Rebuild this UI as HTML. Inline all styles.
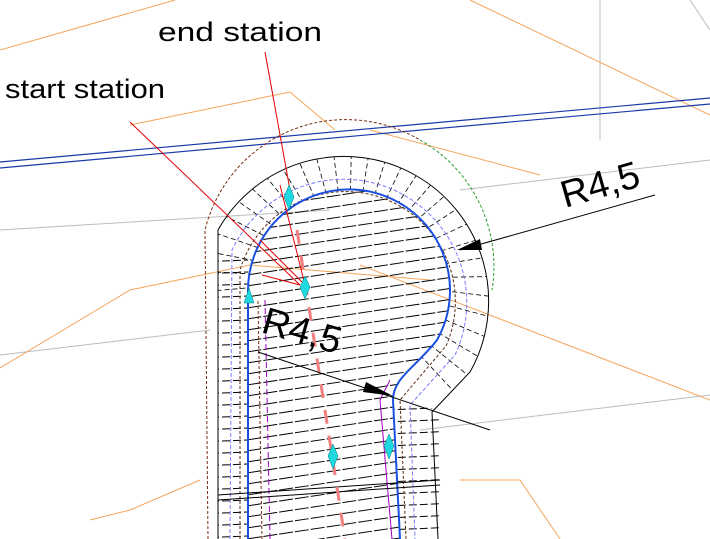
<!DOCTYPE html>
<html><head><style>
html,body{margin:0;padding:0;background:#fff;width:710px;height:539px;overflow:hidden}
svg{display:block}
text{font-family:"Liberation Sans",Arial,sans-serif;fill:#000}
</style></head><body>
<svg width="710" height="539" viewBox="0 0 710 539" xmlns="http://www.w3.org/2000/svg">
<defs>
<clipPath id="inner"><path d="M248,539 L248,290 A101,101 0 1 1 437,340 C415,368 393,378 393,400 L400,539 Z"/></clipPath>
<clipPath id="side"><path d="M218,539 L218,250 L248,250 L248,539 Z M400,539 L393,400 L440,410 L440,539 Z"/></clipPath>
<clipPath id="ring"><path d="M218,539 L218,230 A135,135 0 1 1 470,372 L432,412 L438,539 Z M248,539 L248,290 A101,101 0 1 1 437,340 C415,368 393,378 393,400 L400,539 Z" clip-rule="evenodd"/></clipPath>
</defs>
<g stroke="#bdbdbd" stroke-width="1" fill="none">
<line x1="600" y1="0" x2="600" y2="140"/>
<line x1="0" y1="230" x2="330" y2="210"/>
<line x1="460" y1="190" x2="710" y2="160"/>
<line x1="0" y1="355" x2="210" y2="330"/>
<line x1="420" y1="430" x2="710" y2="395"/>
<line x1="690" y1="0" x2="710" y2="30"/>
</g>
<g stroke="#f5a55a" stroke-width="1" fill="none">
<polyline points="0,50 175,0"/>
<polyline points="470,0 710,115"/>
<polyline points="0,368 130,290 250,265 430,280"/>
<polyline points="130,125 290,92 335,130"/>
<polyline points="370,130 540,175"/>
<polyline points="360,265 710,400"/>
<polyline points="90,520 130,510 200,480"/>
<polyline points="460,480 520,480 560,539"/>
</g>
<g stroke="#1a3aa8" stroke-width="1.2" fill="none">
<line x1="0" y1="162" x2="710" y2="98"/>
<line x1="0" y1="168" x2="710" y2="104"/>
</g>
<g id="hh" stroke="#000" stroke-width="1" stroke-dasharray="14 2">
<g clip-path="url(#inner)">
<g id="h">
<line x1="200" y1="205" x2="480" y2="163"/><line x1="200" y1="216" x2="480" y2="174"/>
<line x1="200" y1="227" x2="480" y2="185"/><line x1="200" y1="238" x2="480" y2="196"/>
<line x1="200" y1="249" x2="480" y2="207"/><line x1="200" y1="260" x2="480" y2="218"/>
<line x1="200" y1="271" x2="480" y2="229"/><line x1="200" y1="282" x2="480" y2="240"/>
<line x1="200" y1="293" x2="480" y2="251"/><line x1="200" y1="304" x2="480" y2="262"/>
<line x1="200" y1="315" x2="480" y2="273"/><line x1="200" y1="326" x2="480" y2="284"/>
<line x1="200" y1="337" x2="480" y2="295"/><line x1="200" y1="348" x2="480" y2="306"/>
<line x1="200" y1="359" x2="480" y2="317"/><line x1="200" y1="370" x2="480" y2="328"/>
<line x1="200" y1="381" x2="480" y2="339"/><line x1="200" y1="392" x2="480" y2="350"/>
<line x1="200" y1="403" x2="480" y2="361"/><line x1="200" y1="414" x2="480" y2="372"/>
<line x1="200" y1="425" x2="480" y2="383"/><line x1="200" y1="436" x2="480" y2="394"/>
<line x1="200" y1="447" x2="480" y2="405"/><line x1="200" y1="458" x2="480" y2="416"/>
<line x1="200" y1="469" x2="480" y2="427"/><line x1="200" y1="480" x2="480" y2="438"/>
<line x1="200" y1="491" x2="480" y2="449"/><line x1="200" y1="502" x2="480" y2="460"/>
<line x1="200" y1="513" x2="480" y2="471"/><line x1="200" y1="524" x2="480" y2="482"/>
<line x1="200" y1="535" x2="480" y2="493"/><line x1="200" y1="546" x2="480" y2="504"/>
<line x1="200" y1="557" x2="480" y2="515"/><line x1="200" y1="568" x2="480" y2="526"/>
<line x1="200" y1="579" x2="480" y2="537"/><line x1="200" y1="590" x2="480" y2="548"/>
</g>
</g>
<g clip-path="url(#side)" stroke-dasharray="8 3">
<line x1="200" y1="262" x2="480" y2="250"/><line x1="200" y1="274" x2="480" y2="262"/>
<line x1="200" y1="286" x2="480" y2="274"/><line x1="200" y1="298" x2="480" y2="286"/>
<line x1="200" y1="310" x2="480" y2="298"/><line x1="200" y1="322" x2="480" y2="310"/>
<line x1="200" y1="334" x2="480" y2="322"/><line x1="200" y1="346" x2="480" y2="334"/>
<line x1="200" y1="358" x2="480" y2="346"/><line x1="200" y1="370" x2="480" y2="358"/>
<line x1="200" y1="382" x2="480" y2="370"/><line x1="200" y1="394" x2="480" y2="382"/>
<line x1="200" y1="406" x2="480" y2="394"/><line x1="200" y1="418" x2="480" y2="406"/>
<line x1="200" y1="430" x2="480" y2="418"/><line x1="200" y1="442" x2="480" y2="430"/>
<line x1="200" y1="454" x2="480" y2="442"/><line x1="200" y1="466" x2="480" y2="454"/>
<line x1="200" y1="478" x2="480" y2="466"/><line x1="200" y1="490" x2="480" y2="478"/>
<line x1="200" y1="502" x2="480" y2="490"/><line x1="200" y1="514" x2="480" y2="502"/>
<line x1="200" y1="526" x2="480" y2="514"/><line x1="200" y1="538" x2="480" y2="526"/>
</g>
</g>
<g clip-path="url(#ring)" stroke="#000" stroke-width="0.8" stroke-dasharray="5 3">
<g transform="translate(349,279)">
<line x1="0" y1="0" x2="200" y2="0" transform="rotate(175)"/><line x1="0" y1="0" x2="200" y2="0" transform="rotate(183)"/>
<line x1="0" y1="0" x2="200" y2="0" transform="rotate(191)"/><line x1="0" y1="0" x2="200" y2="0" transform="rotate(199)"/>
<line x1="0" y1="0" x2="200" y2="0" transform="rotate(207)"/><line x1="0" y1="0" x2="200" y2="0" transform="rotate(215)"/>
<line x1="0" y1="0" x2="200" y2="0" transform="rotate(223)"/><line x1="0" y1="0" x2="200" y2="0" transform="rotate(231)"/>
<line x1="0" y1="0" x2="200" y2="0" transform="rotate(239)"/><line x1="0" y1="0" x2="200" y2="0" transform="rotate(247)"/>
<line x1="0" y1="0" x2="200" y2="0" transform="rotate(255)"/><line x1="0" y1="0" x2="200" y2="0" transform="rotate(263)"/>
<line x1="0" y1="0" x2="200" y2="0" transform="rotate(271)"/><line x1="0" y1="0" x2="200" y2="0" transform="rotate(279)"/>
<line x1="0" y1="0" x2="200" y2="0" transform="rotate(287)"/><line x1="0" y1="0" x2="200" y2="0" transform="rotate(295)"/>
<line x1="0" y1="0" x2="200" y2="0" transform="rotate(303)"/><line x1="0" y1="0" x2="200" y2="0" transform="rotate(311)"/>
<line x1="0" y1="0" x2="200" y2="0" transform="rotate(319)"/><line x1="0" y1="0" x2="200" y2="0" transform="rotate(327)"/>
<line x1="0" y1="0" x2="200" y2="0" transform="rotate(335)"/><line x1="0" y1="0" x2="200" y2="0" transform="rotate(343)"/>
<line x1="0" y1="0" x2="200" y2="0" transform="rotate(351)"/><line x1="0" y1="0" x2="200" y2="0" transform="rotate(359)"/>
<line x1="0" y1="0" x2="200" y2="0" transform="rotate(7)"/><line x1="0" y1="0" x2="200" y2="0" transform="rotate(15)"/>
<line x1="0" y1="0" x2="200" y2="0" transform="rotate(23)"/><line x1="0" y1="0" x2="200" y2="0" transform="rotate(31)"/>
<line x1="0" y1="0" x2="200" y2="0" transform="rotate(39)"/><line x1="0" y1="0" x2="200" y2="0" transform="rotate(47)"/>
</g>
</g>
<path d="M218,539 L218,230 A135,135 0 1 1 470,372 L432,412 L438,539" fill="none" stroke="#000" stroke-width="1"/>
<path d="M208,539 L205,230 A145,145 0 0 1 420,140" fill="none" stroke="#7a2a10" stroke-width="1" stroke-dasharray="3 2"/>
<path d="M420,140 A145,145 0 0 1 492,290" fill="none" stroke="#2a9a2a" stroke-width="1" stroke-dasharray="3 2"/>
<path d="M230,539 L232,250 A118,118 0 1 1 455,355 L410,405 L415,539" fill="none" stroke="#7a7aff" stroke-width="1" stroke-dasharray="4 2"/>
<path d="M240,539 L240,270 A110,110 0 1 1 446,346 L400,400 L406,539" fill="none" stroke="#5a2a10" stroke-width="1" stroke-dasharray="3 2"/>
<path d="M262,539 L258,300" fill="none" stroke="#7a2a10" stroke-width="1" stroke-dasharray="3 2"/>
<path d="M270,539 L265,300" fill="none" stroke="#a000c0" stroke-width="1" stroke-dasharray="6 3"/>
<path d="M248,539 L248,290 A101,101 0 1 1 437,340 C415,368 393,378 393,400 L400,539" fill="none" stroke="#1a50e0" stroke-width="2"/>
<path d="M390,380 L380,400 L386,470 L392,539" fill="none" stroke="#a000c0" stroke-width="1"/>
<g stroke="#000" stroke-width="1">
<line x1="218" y1="495" x2="440" y2="480"/><line x1="218" y1="500" x2="440" y2="485"/>
</g>
<g stroke="#f08080" stroke-width="3" stroke-dasharray="14 12">
<line x1="297" y1="230" x2="345" y2="539"/>
</g>
<g stroke="#e00000" stroke-width="1">
<line x1="265" y1="52" x2="290" y2="190"/>
<line x1="280" y1="185" x2="305" y2="285"/>
<line x1="130" y1="122" x2="300" y2="285"/>
<line x1="260" y1="240" x2="305" y2="285"/>
<line x1="262" y1="275" x2="300" y2="285"/>
</g>
<g fill="#20d8e0" stroke="#008080" stroke-width="0.5">
<path d="M289,185 L294,197 L289,210 L284,197 Z"/>
<path d="M305,276 L310,287 L305,299 L300,287 Z"/>
<path d="M249,288 L254,303 L244,303 Z"/>
<path d="M333,444 L338,456 L333,469 L328,456 Z"/>
<path d="M389,434 L394,446 L389,459 L384,446 Z"/>
</g>
<g stroke="#000" stroke-width="1">
<line x1="460" y1="250" x2="655" y2="195"/>
<line x1="258" y1="352" x2="490" y2="430"/>
</g>
<path d="M457,250 L480,239 L482,250 Z" fill="#000"/>
<path d="M393,396 L366,382 L363,392 Z" fill="#000"/>
<text x="158" y="41" font-size="27" textLength="164" lengthAdjust="spacingAndGlyphs">end  station</text>
<text x="5" y="98" font-size="27" textLength="160" lengthAdjust="spacingAndGlyphs">start station</text>
<text x="565" y="208" font-size="38" transform="rotate(-16 565 208)">R4,5</text>
<text x="260" y="332" font-size="38" transform="rotate(16 260 332)">R4,5</text>
</svg>
</body></html>
